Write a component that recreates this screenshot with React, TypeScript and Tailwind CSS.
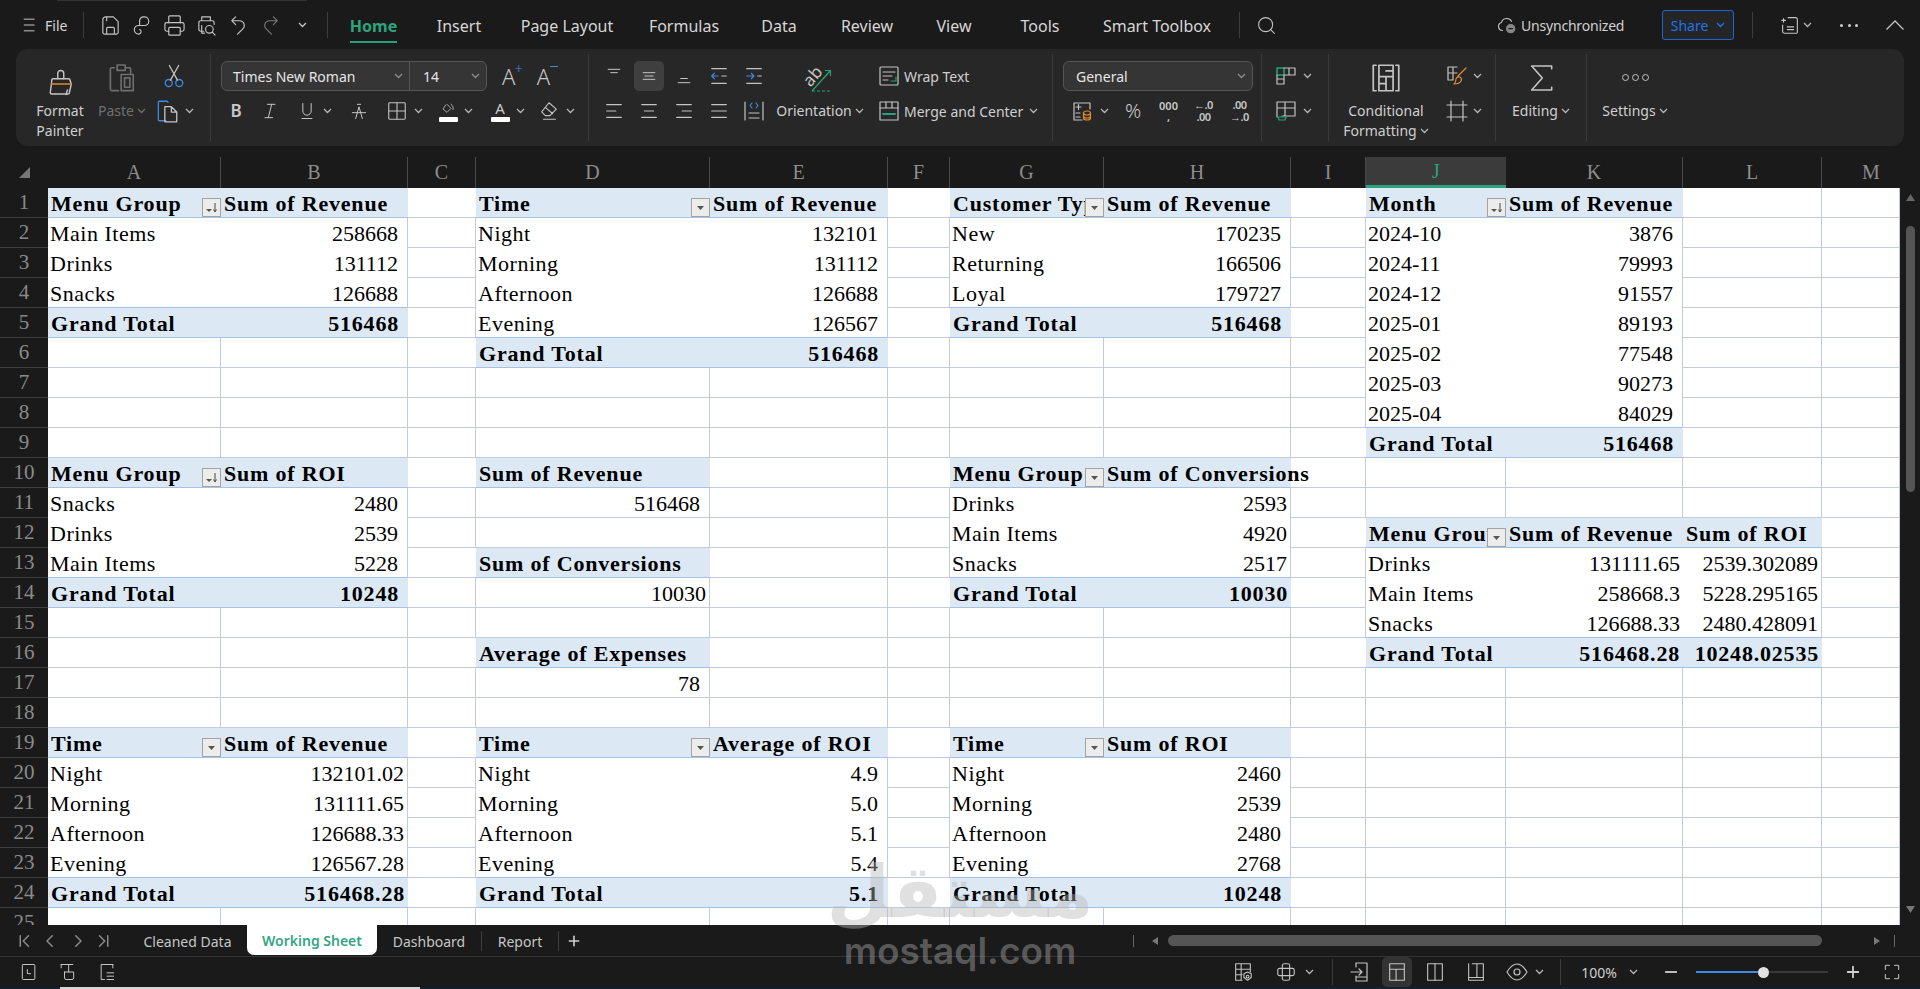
import React from "react";
import { Printer, Search, Plus, Minus } from "lucide-react";

type Kind = "blank" | "header" | "body" | "total";
type Cell = { kind: Kind; text?: string; right?: boolean; tight?: boolean; filter?: "sort" | "plain"; bBlue?: boolean; rGrid?: boolean; bNone?: boolean };

const COLS = ["A", "B", "C", "D", "E", "F", "G", "H", "I", "J", "K", "L", "M"];
const cells: Record<string, Cell> = {};
const key = (r: number, c: number) => r + "-" + c;

function pivot(r: number, c: number, head: string[], body: (string | number)[][], total: (string | number)[] | null, filter?: "sort" | "plain", tightCols: number[] = []) {
  const n = head.length;
  head.forEach((t, i) => {
    cells[key(r, c + i)] = { kind: "header", text: t, filter: i === 0 ? filter : undefined };
  });
  body.forEach((row, ri) => {
    row.forEach((t, i) => {
      const last = ri === body.length - 1;
      cells[key(r + 1 + ri, c + i)] = {
        kind: "body",
        text: String(t),
        right: typeof t === "number" || i > 0,
        tight: tightCols.includes(i),
        bBlue: last && !!total,
        bNone: !last,
        rGrid: i === n - 1,
      };
    });
  });
  if (total) {
    total.forEach((t, i) => {
      cells[key(r + 1 + body.length, c + i)] = { kind: "total", text: String(t), right: i > 0, tight: tightCols.includes(i) };
    });
  }
}

const times = ["Night", "Morning", "Afternoon", "Evening"];
pivot(1, 0, ["Menu Group", "Sum of Revenue"], [["Main Items", "258668"], ["Drinks", "131112"], ["Snacks", "126688"]], ["Grand Total", "516468"], "sort");
pivot(1, 3, ["Time", "Sum of Revenue"], [["Night", "132101"], ["Morning", "131112"], ["Afternoon", "126688"], ["Evening", "126567"]], ["Grand Total", "516468"], "plain");
pivot(1, 6, ["Customer Type", "Sum of Revenue"], [["New", "170235"], ["Returning", "166506"], ["Loyal", "179727"]], ["Grand Total", "516468"], "plain");
pivot(1, 9, ["Month", "Sum of Revenue"], [["2024-10", "3876"], ["2024-11", "79993"], ["2024-12", "91557"], ["2025-01", "89193"], ["2025-02", "77548"], ["2025-03", "90273"], ["2025-04", "84029"]], ["Grand Total", "516468"], "sort");
pivot(10, 0, ["Menu Group", "Sum of ROI"], [["Snacks", "2480"], ["Drinks", "2539"], ["Main Items", "5228"]], ["Grand Total", "10248"], "sort");
pivot(10, 3, ["Sum of Revenue"], [[516468]], null);
pivot(13, 3, ["Sum of Conversions"], [[10030]], null, undefined, [0]);
pivot(16, 3, ["Average of Expenses"], [[78]], null);
pivot(10, 6, ["Menu Group", "Sum of Conversions"], [["Drinks", "2593"], ["Main Items", "4920"], ["Snacks", "2517"]], ["Grand Total", "10030"], "plain", [1]);
pivot(12, 9, ["Menu Group", "Sum of Revenue", "Sum of ROI"], [["Drinks", "131111.65", "2539.302089"], ["Main Items", "258668.3", "5228.295165"], ["Snacks", "126688.33", "2480.428091"]], ["Grand Total", "516468.28", "10248.02535"], "plain", [1, 2]);
pivot(19, 0, ["Time", "Sum of Revenue"], times.map((t, i) => [t, ["132101.02", "131111.65", "126688.33", "126567.28"][i]]), ["Grand Total", "516468.28"], "plain", [1]);
pivot(19, 3, ["Time", "Average of ROI"], times.map((t, i) => [t, ["4.9", "5.0", "5.1", "5.4"][i]]), ["Grand Total", "5.1"], "plain");
pivot(19, 6, ["Time", "Sum of ROI"], times.map((t, i) => [t, ["2460", "2539", "2480", "2768"][i]]), ["Grand Total", "10248"], "plain");

function FilterBtn({ sort }: { sort: boolean }) {
  return (
    <span className="absolute right-0 bottom-0 flex h-[19px] w-[19px] items-center justify-center border border-[#a3a3a3] bg-[#ececec]">
      <svg width="15" height="13" viewBox="0 0 15 13">
        {sort ? (
          <>
            <path d="M2 8h6l-3 3z" fill="#555" />
            <path d="M11 2v8M9.500 8.500L11 11l1.500-2.500" stroke="#444" fill="none" />
          </>
        ) : (
          <path d="M4 5h7l-3.500 4z" fill="#555" />
        )}
      </svg>
    </span>
  );
}

function SheetCell({ r, c }: { r: number; c: number }) {
  const cell = cells[key(r, c)] || ({ kind: "blank" } as Cell);
  const next = cells[key(r, c + 1)];
  const nextFilled = next && (next.kind === "header" || next.kind === "total");
  const filled = cell.kind === "header" || cell.kind === "total";
  const rCls = filled || nextFilled ? "" : cell.kind === "body" && !cell.rGrid ? "" : "border-r border-r-[#c3cbde]";
  const bCls = filled || cell.bBlue ? "border-b border-b-[#a6c3e6]" : cell.bNone ? "" : "border-b border-b-[#c3cbde]";
  const bg = filled ? "bg-[#dce9f5]" : "bg-white";
  const isWord = !!cell.text && !/^[0-9]/.test(cell.text);
  const weight = filled ? "font-bold tracking-[0.8px]" : isWord ? "font-normal tracking-[0.5px]" : "font-normal";
  const lead = filled ? "leading-[32px]" : "leading-[31px]";
  const align = cell.right ? (cell.tight ? "text-right pr-[3px]" : "text-right pr-[9px]") : filled ? "text-left pl-[3px]" : "text-left pl-[2px]";
  const clip = cell.filter ? "overflow-hidden" : "overflow-visible";
  const z = cell.text && cell.text.startsWith("Sum of Conv") ? "relative z-10" : "relative";
  return (
    <div className={`${z} ${bg} ${rCls} ${bCls} ${clip} ${weight} ${lead} ${align} h-[30px] whitespace-nowrap text-[22px] text-black`}>
      {cell.text}
      {cell.filter && <FilterBtn sort={cell.filter === "sort"} />}
    </div>
  );
}

const Chev = ({ c = "#b5b5b5" }: { c?: string }) => (
  <svg width="9" height="6" viewBox="0 0 9 6" className="shrink-0">
    <path d="M1 1l3.500 3.500L8 1" stroke={c} strokeWidth="1.3" fill="none" />
  </svg>
);

const Ico = ({ s = 24, w = 1.2, c = "#c4c4c4", children }: { s?: number; w?: number; c?: string; children: React.ReactNode }) => (
  <svg width={s} height={s} viewBox="0 0 24 24" fill="none" stroke={c} strokeWidth={w} strokeLinecap="round" strokeLinejoin="round" className="shrink-0">
    {children}
  </svg>
);

const Slot = ({ w, children, gap = "gap-[6px]" }: { w: string; children: React.ReactNode; gap?: string }) => (
  <div className={`${w} ${gap} flex h-full shrink-0 items-center justify-center`}>{children}</div>
);

const VSep = () => <div className="h-[26px] w-px shrink-0 bg-[#3d3d3d]" />;

function TitleBar() {
  const tabs: [string, string][] = [
    ["Insert", "w-[86px]"],
    ["Page Layout", "w-[130px]"],
    ["Formulas", "w-[104px]"],
    ["Data", "w-[86px]"],
    ["Review", "w-[90px]"],
    ["View", "w-[84px]"],
    ["Tools", "w-[88px]"],
    ["Smart Toolbox", "w-[146px]"],
  ];
  return (
    <div className="flex h-[48px] shrink-0 items-center text-[16px] text-[#d6d6d6]">
      <div className="ml-[20px] flex w-[20px] justify-center">
        <Ico s={20}><path d="M5 5h12M5 12h12M5 19h12" /></Ico>
      </div>
      <div className="w-[43px] pl-[5px] text-[14px]">File</div>
      <VSep />
      <div className="ml-[10px] flex h-[32px]">
        <Slot w="w-[32px]"><Ico s={23}><path d="M7 3h8l5 5v11a2 2 0 0 1-2 2H6a2 2 0 0 1-2-2V6a3 3 0 0 1 3-3zM8 21v-6a1 1 0 0 1 1-1h6a1 1 0 0 1 1 1v6M8 3v4" /></Ico></Slot>
        <Slot w="w-[32px]"><Ico s={23}><path d="M9 11V7a4 4 0 0 1 4-4h1a4.500 4.500 0 0 1 0 9H8a4.500 4.500 0 0 0 0 9 2.500 2.500 0 0 0 1-4.800" /></Ico></Slot>
        <Slot w="w-[32px]"><Printer size={23} strokeWidth={1.2} color="#c4c4c4" /></Slot>
        <Slot w="w-[32px]"><Ico s={23}><path d="M7 7V3h9v4M9 18H6a2 2 0 0 1-2-2v-7a2 2 0 0 1 2-2h12a2 2 0 0 1 2 2v2M7 12v8h3" /><circle cx="15" cy="16" r="4" /><path d="M18 19l3 3" /></Ico></Slot>
        <Slot w="w-[32px]"><Ico s={23}><path d="M9 3L5 7l4 4M5 7h8a5 5 0 0 1 3 9l-5 5" /></Ico></Slot>
        <Slot w="w-[32px]"><Ico s={23} c="#777"><path d="M15 3l4 4-4 4M19 7h-8a5 5 0 0 0-3 9l5 5" /></Ico></Slot>
        <Slot w="w-[32px]"><Chev c="#c4c4c4" /></Slot>
      </div>
      <div className="ml-[9px]"><VSep /></div>
      <div className="ml-[3px] flex h-[48px]">
        <div className="flex w-[85px] items-start justify-center pt-[15px]">
          <span className="h-[27px] border-b-[2px] border-b-[#25a27b] font-bold leading-[20px] text-[#2aa57e]">Home</span>
        </div>
        {tabs.map(([t, w]) => (
          <div key={t} className={`${w} flex items-start justify-center pt-[15px] leading-[20px]`}>{t}</div>
        ))}
      </div>
      <div className="ml-[9px]"><VSep /></div>
      <div className="ml-[8px] flex w-[36px] justify-center"><Search size={21} strokeWidth={1.2} color="#c4c4c4" /></div>
      <div className="ml-auto flex items-center pr-[15px]">
        <Ico s={22}><path d="M7 18a4.500 4.500 0 0 1-1-8.800A6 6 0 0 1 17 8" /><circle cx="16" cy="16" r="4.500" fill="#888" stroke="#888" /><path d="M14 16h4" stroke="#1a1a1a" /></Ico>
        <span className="ml-[3px] w-[105px] text-[14px] tracking-[-0.2px] text-[#cfcfcf]">Unsynchronized</span>
        <div className="ml-[36px] flex h-[30px] w-[72px] items-center justify-center gap-[8px] rounded-[3px] border border-[#1767d8] bg-[#252525] text-[14px] text-[#1f74ea]">
          Share <Chev c="#1f74ea" />
        </div>
        <div className="ml-[18px]"><VSep /></div>
        <div className="ml-[26px] flex items-center gap-[2px]">
          <Ico s={22}><path d="M3 7h4M5 5v4M10 4h8a2 2 0 0 1 2 2v14a1 1 0 0 1-1 1H6a2 2 0 0 1-2-2v-7M9 14h7M9 17h7" /></Ico>
          <Chev />
        </div>
        <div className="ml-[28px] flex w-[18px] justify-between">
          <span className="h-[3px] w-[3px] rounded-full bg-[#d0d0d0]" />
          <span className="h-[3px] w-[3px] rounded-full bg-[#d0d0d0]" />
          <span className="h-[3px] w-[3px] rounded-full bg-[#d0d0d0]" />
        </div>
        <div className="ml-[27px]">
          <svg width="20" height="12" viewBox="0 0 20 12"><path d="M1.500 10.500L10 2l8.500 8.500" stroke="#c4c4c4" strokeWidth="1.3" fill="none" /></svg>
        </div>
      </div>
    </div>
  );
}

const Big = ({ w, icon, lines, dim }: { w: string; icon: React.ReactNode; lines: React.ReactNode[]; dim?: boolean }) => (
  <div className={`${w} flex shrink-0 flex-col items-center ${dim ? "text-[#6f6f6f]" : "text-[#cfcfcf]"}`}>
    <div className="flex h-[47px] items-center justify-center">{icon}</div>
    {lines.map((l, i) => (
      <div key={i} className="flex items-center gap-[3px] whitespace-nowrap text-[14px] leading-[20px]">{l}</div>
    ))}
  </div>
);

const Group = ({ w, children }: { w: string; children: React.ReactNode }) => (
  <div className={`${w} flex h-full shrink-0 border-r border-r-[#3a3a3a]`}>{children}</div>
);

const R1 = ({ children }: { children: React.ReactNode }) => <div className="flex h-[44px] items-center">{children}</div>;
const R2 = ({ children }: { children: React.ReactNode }) => <div className="flex h-[26px] items-center">{children}</div>;

function Ribbon() {
  return (
    <div className="ml-[16px] flex h-[97px] w-[1888px] shrink-0 rounded-[12px] bg-[#272727] py-[5px] text-[14px] text-[#cfcfcf]">
      <Group w="w-[195px]">
        <Big w="w-[60px] ml-[14px]" icon={
          <Ico s={36} w={0.95}>
            <path d="M10.500 12.500V9a2 2 0 0 1 4 0v3.500" />
            <path d="M7.300 12.500h10.400a1 1 0 0 1 1 1l.8 2.500-1.300 6a1 1 0 0 1-1 .7H6.500a1 1 0 0 1-1-1l.8-6 .2-2.200a1 1 0 0 1 .8-1z" />
            <path d="M6.300 16h13.200" stroke="#e08a2e" />
            <path d="M16 23l1-3" />
          </Ico>
        } lines={["Format", "Painter"]} />
        <Big w="w-[56px] ml-[4px]" dim icon={
          <Ico s={34} c="#6f6f6f"><path d="M7 5H5a1 1 0 0 0-1 1v15a1 1 0 0 0 1 1h5M9 3h6v4H9zM15 5h3a1 1 0 0 1 1 1v3M12 10h9v12h-9zM14.500 12.500h4v7h-4z" transform="scale(0.95)" /></Ico>
        } lines={[<>Paste <Chev c="#6f6f6f" /></>]} />
        <div className="ml-[4px] flex w-[50px] flex-col">
          <R1><Slot w="w-[40px]"><Ico s={28} c="#3d8be0" w={1.1}><circle cx="7.500" cy="18" r="3" /><circle cx="16.500" cy="18" r="3" /><path d="M9 15.500L16 3M15 15.500L8 3" stroke="#c4c4c4" /></Ico></Slot></R1>
          <R2><div className="flex items-center gap-[5px]"><Ico s={26}><path d="M11 21H5a1 1 0 0 1-1-1V4a1 1 0 0 1 1-1h7l1 1" stroke="#3d8be0" /><path d="M10 8h6l5 5v9H10zM16 8v5h5" /></Ico><Chev /></div></R2>
        </div>
      </Group>

      <Group w="w-[378px]">
        <div className="ml-[10px] flex flex-col">
          <div className="flex h-[44px] items-center">
            <div className="flex h-[30px] w-[266px] items-center rounded-[6px] border border-[#555] bg-[#353535] text-[14px] text-[#e6e6e6]">
              <div className="flex h-full w-[188px] items-center justify-between border-r border-r-[#555] pl-[11px] pr-[6px]">Times New Roman <Chev c="#8e8e8e" /></div>
              <div className="flex flex-1 items-center justify-between pl-[13px] pr-[6px]">14 <Chev c="#8e8e8e" /></div>
            </div>
            <div className="ml-[8px] flex w-[35px] justify-center text-[22px] font-light leading-[26px] text-[#c8c8c8]">A<span className="-ml-[1px] -mt-[2px] text-[15px] leading-[15px] text-[#3d8be0]">+</span></div>
            <div className="flex w-[35px] justify-center text-[22px] font-light leading-[26px] text-[#c8c8c8]">A<span className="mt-[3px] h-px w-[8px] bg-[#3d8be0]" /></div>
          </div>
          <R2>
            <Slot w="w-[30px]"><span className="text-[17px] font-semibold text-[#c8c8c8]">B</span></Slot>
            <Slot w="w-[38px]"><Ico s={20}><path d="M9 4h9M6 20h9M14 4l-4 16" /></Ico></Slot>
            <Slot w="w-[51px]"><Ico s={20}><path d="M7 3v9a5 5 0 0 0 10 0V3M6 21h12" /></Ico><Chev /></Slot>
            <Slot w="w-[38px]"><Ico s={20}><path d="M4 14h16M8 21l4-14 4 14M10 4h4" /></Ico></Slot>
            <Slot w="w-[52px]"><Ico s={22}><rect x="3" y="3" width="18" height="18" rx="1" /><path d="M3 12h18M12 3v18" /></Ico><Chev /></Slot>
            <Slot w="w-[52px]"><div className="flex flex-col items-center"><Ico s={16}><path d="M7 6l-4 6 6 5 6-6-6-6M15 5c3 2 4 5 3 8" /></Ico><span className="h-[5px] w-[19px] rounded-[1px] bg-white" /></div><Chev /></Slot>
            <Slot w="w-[51px]"><div className="flex flex-col items-center"><span className="h-[16px] text-[15px] leading-[16px] text-[#c8c8c8]">A</span><span className="mt-[1px] h-[5px] w-[19px] rounded-[1px] bg-white" /></div><Chev /></Slot>
            <Slot w="w-[47px]"><Ico s={22}><path d="M12 3l8 7-7 7H8l-4-4zM8 8l8 7M6 21h13" /></Ico><Chev /></Slot>
          </R2>
        </div>
      </Group>

      <Group w="w-[464px]">
        <div className="ml-[7px] flex w-[175px] flex-col">
          <R1>
            <Slot w="w-[35px]"><Ico s={20}><path d="M5 4h14M8 8h8" /></Ico></Slot>
            <Slot w="w-[35px]"><div className="flex h-[30px] w-[30px] items-center justify-center rounded-[5px] bg-[#3f3f3f]"><Ico s={20}><path d="M5 8h14M7 12h10M5 16h14" /></Ico></div></Slot>
            <Slot w="w-[35px]"><Ico s={20}><path d="M8 15h8M5 20h14" /></Ico></Slot>
            <Slot w="w-[35px]"><Ico s={22}><path d="M4 4h16M4 20h16M15 12h5" /><path d="M11 12H4M7 9l-3 3 3 3" stroke="#3d8be0" /></Ico></Slot>
            <Slot w="w-[35px]"><Ico s={22}><path d="M4 4h16M4 20h16M16 12h4" /><path d="M4 12h8M9 9l3 3-3 3" stroke="#3d8be0" /></Ico></Slot>
          </R1>
          <R2>
            <Slot w="w-[35px]"><Ico s={22}><path d="M4 5h16M4 12h10M4 19h16" /></Ico></Slot>
            <Slot w="w-[35px]"><Ico s={22}><path d="M4 5h16M7 12h10M4 19h16" /></Ico></Slot>
            <Slot w="w-[35px]"><Ico s={22}><path d="M4 5h16M10 12h10M4 19h16" /></Ico></Slot>
            <Slot w="w-[35px]"><Ico s={22}><path d="M4 5h16M4 12h16M4 19h16" /></Ico></Slot>
            <Slot w="w-[35px]"><Ico s={24}><path d="M3 3v18M21 3v18M7 14h10M7 19h10" /><path d="M10 4l-2 2.500 2 2.500M14 4l2 2.500-2 2.500" stroke="#3d8be0" /></Ico></Slot>
          </R2>
        </div>
        <Big w="w-[98px]" icon={
          <svg width="36" height="36" viewBox="0 0 36 36" fill="none" className="shrink-0 overflow-visible">
            <text x="15" y="20" transform="rotate(-50 15 20)" textAnchor="middle" fontSize="17" fill="#c4c4c4" fontFamily="Noto Sans, sans-serif">ab</text>
            <path d="M10 31L28 11M23 10.500h5.500V16" stroke="#25a27b" strokeWidth="1.2" />
            <path d="M10 31h20" stroke="#25a27b" strokeWidth="1.2" strokeDasharray="3 2" />
          </svg>
        } lines={[<>Orientation <Chev /></>]} />
        <div className="ml-[8px] flex flex-col text-[14px]">
          <R1><Ico s={24}><rect x="3" y="3" width="18" height="18" rx="1" /><path d="M6 8h12M6 12h9M6 16h5" /><path d="M19 13v4h-5" stroke="#25a27b" /></Ico><span className="ml-[3px]">Wrap Text</span></R1>
          <R2><Ico s={24}><rect x="3" y="3" width="18" height="18" /><path d="M3 9h18M9 3v6M15 3v6" /><path d="M6 15h12" stroke="#25a27b" strokeWidth="2" /></Ico><span className="ml-[3px]">Merge and Center</span><span className="ml-[6px]"><Chev /></span></R2>
        </div>
      </Group>

      <Group w="w-[209px]">
        <div className="ml-[10px] flex flex-col">
          <R1>
            <div className="flex h-[30px] w-[190px] items-center justify-between rounded-[6px] border border-[#555] bg-[#353535] pl-[12px] pr-[6px] text-[14px] text-[#e6e6e6]">General <Chev c="#8e8e8e" /></div>
          </R1>
          <R2>
            <Slot w="w-[52px]"><Ico s={24}><path d="M20 10V4H4v17h8M6 8h5M8.500 5.500v5M6 14h4M6 18h4" /><ellipse cx="17" cy="14" rx="3.500" ry="2" stroke="#e08a2e" /><path d="M13.500 14v5c0 1 1.500 2 3.500 2s3.500-1 3.500-2v-5M13.500 17c0 1 1.500 2 3.500 2s3.500-1 3.500-2" stroke="#e08a2e" /></Ico><Chev /></Slot>
            <Slot w="w-[36px]"><span className="text-[20px] font-light text-[#c8c8c8]">%</span></Slot>
            <Slot w="w-[35px]"><span className="text-center text-[11px] font-semibold leading-[11px] text-[#c8c8c8]">000<br />,</span></Slot>
            <Slot w="w-[35px]"><span className="text-center text-[11px] font-semibold leading-[12px] tracking-[-0.5px] text-[#c8c8c8]">←.0<br />.00</span></Slot>
            <Slot w="w-[37px]"><span className="text-center text-[11px] font-semibold leading-[12px] tracking-[-0.5px] text-[#c8c8c8]">.00<br />→.0</span></Slot>
          </R2>
        </div>
      </Group>

      <Group w="w-[67px]">
        <div className="ml-[12px] flex flex-col">
          <R1><div className="flex items-center gap-[5px]"><Ico s={24}><rect x="3" y="4" width="7" height="7" stroke="#25a27b" strokeWidth="1.5" /><path d="M10 4h11v7H10M15 4v7M3 11v9h7v-9M3 15h7" /></Ico><Chev /></div></R1>
          <R2><div className="flex items-center gap-[5px]"><Ico s={24}><path d="M3 18V3h18v14H8M3 9h18M11 3v14" /><path d="M4 18h8l-1 3H5z" stroke="#25a27b" /></Ico><Chev /></div></R2>
        </div>
      </Group>

      <Group w="w-[167px]">
        <Big w="w-[106px] ml-[4px]" icon={
          <Ico s={34}><path d="M5 3H3v18h2M19 3h2v18h-2M7 3h10v18H7zM7 11h10M12 11v10M17 7h-5M7 16h5" /></Ico>
        } lines={["Conditional", <>Formatting <Chev /></>]} />
        <div className="ml-[6px] flex flex-col">
          <R1><div className="flex items-center gap-[4px]"><Ico s={24}><path d="M12 3H3v13h5M3 9h9M8 3v13" /><path d="M21 4l-8 8M15 13a3 3 0 0 0-4 2c0 2-1 4-2 5 3 0 6-1 7-3a3 3 0 0 0-1-4z" stroke="#e08a2e" /></Ico><Chev /></div></R1>
          <R2><div className="flex items-center gap-[4px]"><Ico s={24}><path d="M6 2v20M18 2v20M2 6h20M2 18h20" /></Ico><Chev /></div></R2>
        </div>
      </Group>

      <Group w="w-[91px]">
        <Big w="w-full" icon={<Ico s={32}><path d="M20 5V3H5l8 9-8 9h15v-2" /></Ico>} lines={[<>Editing <Chev /></>]} />
      </Group>

      <div className="flex h-full w-[96px] shrink-0">
        <Big w="w-full" icon={
          <div className="flex gap-[3px]">
            <span className="h-[7px] w-[7px] rounded-full border border-[#c4c4c4]" />
            <span className="h-[7px] w-[7px] rounded-full border border-[#c4c4c4]" />
            <span className="h-[7px] w-[7px] rounded-full border border-[#c4c4c4]" />
          </div>
        } lines={[<>Settings <Chev /></>]} />
      </div>
    </div>
  );
}

function Sheet() {
  return (
    <div className="mt-[11px] flex min-h-0 flex-1 overflow-hidden">
      <div className="grid flex-1 grid-cols-[48px_173px_187px_68px_234px_178px_62px_154px_187px_75px_140px_177px_139px_78px] grid-rows-[31px_repeat(25,30px)] content-start font-['Liberation_Serif','Times_New_Roman',serif]">
        <div className="flex items-center justify-end pr-[18px]">
          <svg width="11" height="11" viewBox="0 0 11 11"><path d="M11 0v11H0z" fill="#777" /></svg>
        </div>
        {COLS.map((c) => (
          <div key={c} className={`flex h-[31px] items-center justify-center text-[20px] ${c === "J" ? "border-b-[3px] border-b-[#2aa57e] bg-[#3b3b3b] font-normal text-[#2aa57e]" : c === "M" ? "pb-[2px] pl-[20px] text-[#8d8d8d]" : "border-r border-r-[#4a4a4a] pb-[2px] text-[#8d8d8d]"}`}>
            {c}
          </div>
        ))}
        {Array.from({ length: 25 }).map((_, ri) => {
          const r = ri + 1;
          return (
            <React.Fragment key={r}>
              <div className="flex h-[30px] items-center justify-center border-b border-b-[#3e3e3e] text-[21px] text-[#8a8a8a]">{r}</div>
              {COLS.map((_c, c) => <SheetCell key={c} r={r} c={c} />)}
            </React.Fragment>
          );
        })}
      </div>
      <div className="flex w-[20px] shrink-0 flex-col items-center bg-[#1a1a1a] pt-[37px]">
        <svg width="9" height="7" viewBox="0 0 9 7"><path d="M4.500 0L9 7H0z" fill="#666" /></svg>
        <div className="mt-[25px] h-[266px] w-[9px] rounded-full bg-[#555]" />
        <div className="flex-1" />
        <svg width="9" height="7" viewBox="0 0 9 7" className="mb-[12px]"><path d="M4.500 7L9 0H0z" fill="#777" /></svg>
      </div>
    </div>
  );
}

function TabBar() {
  return (
    <div className="flex h-[32px] shrink-0 items-start border-b border-b-[#333] bg-[#1a1a1a] text-[14px] text-[#c6c6c6]">
      <div className="flex h-[31px] w-[128px] shrink-0 items-center pl-[12px] text-[#8a8a8a]">
        <Slot w="w-[24px]"><Ico s={18} c="#8a8a8a" w={2}><path d="M7 5v14M18 5l-7 7 7 7" /></Ico></Slot>
        <Slot w="w-[28px]"><Ico s={18} c="#8a8a8a" w={2}><path d="M15 5l-7 7 7 7" /></Ico></Slot>
        <Slot w="w-[28px]"><Ico s={18} c="#8a8a8a" w={2}><path d="M9 5l7 7-7 7" /></Ico></Slot>
        <Slot w="w-[24px]"><Ico s={18} c="#8a8a8a" w={2}><path d="M17 5v14M6 5l7 7-7 7" /></Ico></Slot>
      </div>
      <div className="flex h-[32px] w-[119px] items-center justify-center">Cleaned Data</div>
      <div className="flex h-[30px] w-[130px] items-center justify-center rounded-b-[7px] bg-white pt-[1px] font-semibold text-[#34a585]">Working Sheet</div>
      <div className="flex h-[32px] w-[104px] items-center justify-center"><span>Dashboard</span></div>
      <div className="mt-[6px] h-[20px] w-px bg-[#3d3d3d]" />
      <div className="flex h-[32px] w-[76px] items-center justify-center">Report</div>
      <div className="mt-[6px] h-[20px] w-px bg-[#3d3d3d]" />
      <div className="flex h-[31px] w-[30px] items-center justify-center"><Plus size={16} strokeWidth={2.4} color="#d0d0d0" /></div>
      <div className="ml-auto flex h-[31px] items-center pr-[25px]">
        <div className="h-[12px] w-px bg-[#666]" />
        <svg width="6" height="8" viewBox="0 0 6 8" className="ml-[18px]"><path d="M6 0v8L0 4z" fill="#777" /></svg>
        <div className="ml-[10px] h-[11px] w-[654px] rounded-full bg-[#555]" />
        <svg width="6" height="8" viewBox="0 0 6 8" className="ml-[52px]"><path d="M0 0v8l6-4z" fill="#777" /></svg>
        <div className="ml-[14px] h-[12px] w-px bg-[#666]" />
      </div>
    </div>
  );
}

function StatusBar() {
  return (
    <div className="flex h-[30px] shrink-0 items-center bg-[#1a1a1a] text-[14px] text-[#cfcfcf]">
      <div className="ml-[18px] flex h-full">
        <Slot w="w-[22px]"><Ico s={20}><rect x="4" y="3" width="15" height="18" rx="1" /><path d="M10 9v5h4" /></Ico></Slot>
        <Slot w="w-[18px] ml-[18px]"><Ico s={20}><path d="M5 3h14M5 3v4M9 12v7a2 2 0 0 0 2 2h7a2 2 0 0 0 2-2v-7H9M14 3v9" /></Ico></Slot>
        <Slot w="w-[22px] ml-[20px]"><Ico s={20}><path d="M19 3H5v18h4M19 3v4M12 13h8M12 17h8M12 21h8" /></Ico></Slot>
      </div>
      <div className="ml-auto flex h-full items-center pr-[18px]">
        <Ico s={22}><path d="M11 21H4V3h16v9M4 9h16M4 15h7M10 3v18" /><path d="M17 12l4 2v4l-4 3-4-3v-4z" /><circle cx="17" cy="17" r="1.500" /></Ico>
        <div className="ml-[21px] flex items-center gap-[8px]"><Ico s={22}><rect x="8" y="3" width="8" height="18" rx="2" /><rect x="3" y="8" width="18" height="8" rx="2" /></Ico><Chev /></div>
        <div className="ml-[18px]"><VSep /></div>
        <div className="ml-[15px]"><Ico s={24}><path d="M8 7V3h11v18H8v-5M3 12h11M11 9l3 3-3 3M8 17h11" /></Ico></div>
        <div className="ml-[10px] flex h-[30px] w-[30px] items-center justify-center rounded-[5px] bg-[#333]"><Ico s={22}><rect x="4" y="3" width="16" height="18" /><path d="M4 9h16M11 9v12" /></Ico></div>
        <div className="ml-[12px]"><Ico s={22}><rect x="4" y="3" width="16" height="18" /><path d="M12 3v18" /></Ico></div>
        <div className="ml-[19px]"><Ico s={22}><path d="M4 3v18h16v-3M4 18h16V3h-7v15M8 3h5" /></Ico></div>
        <div className="ml-[18px] flex items-center gap-[6px]"><Ico s={24}><path d="M2 12c3-5 6-8 10-8s7 3 10 8c-3 5-6 8-10 8s-7-3-10-8z" /><circle cx="12" cy="12" r="3" /></Ico><Chev /></div>
        <div className="ml-[16px]"><VSep /></div>
        <span className="ml-[20px]">100%</span>
        <span className="ml-[12px]"><Chev /></span>
        <div className="ml-[24px]"><Minus size={18} strokeWidth={2.4} color="#bdbdbd" /></div>
        <div className="ml-[16px] flex w-[132px] items-center">
          <div className="h-[2px] w-[62px] bg-[#3b8be8]" />
          <div className="h-[11px] w-[11px] rounded-full bg-[#e2e2e2]" />
          <div className="h-[2px] flex-1 bg-[#3a3a3a]" />
        </div>
        <div className="ml-[16px]"><Plus size={18} strokeWidth={2.4} color="#d0d0d0" /></div>
        <div className="ml-[20px]"><Ico s={20}><path d="M4 9V4h5M20 9V4h-5M4 15v5h5M20 15v5h-5" /></Ico></div>
      </div>
    </div>
  );
}

export default function App() {
  return (
    <div className="relative flex h-[989px] w-[1920px] flex-col overflow-hidden bg-[#1a1a1a] font-['Noto_Sans','Open_Sans',sans-serif]">
      <div className="h-px w-[250px] shrink-0 translate-x-[57px] bg-[#333]" />
      <TitleBar />
      <Ribbon />
      <Sheet />
      <TabBar />
      <StatusBar />
      <div className="flex h-[2px] shrink-0 bg-[#16202c]">
        <div className="ml-[60px] w-[360px] bg-[#d5d5d5]" />
      </div>
      <div className="pointer-events-none absolute left-[845px] top-[847px] z-20 flex w-[230px] flex-col items-center text-[rgba(180,180,180,0.42)]">
        <div className="flex w-[230px] justify-center">
          <span dir="rtl" className="shrink-0 whitespace-nowrap font-['DejaVu_Sans',sans-serif] text-[73px] font-bold leading-[90px]">مستقل</span>
        </div>
        <span className="-mt-[11px] whitespace-nowrap font-['Inter',sans-serif] text-[37px] font-semibold leading-[50px]">mostaql.com</span>
      </div>
    </div>
  );
}
